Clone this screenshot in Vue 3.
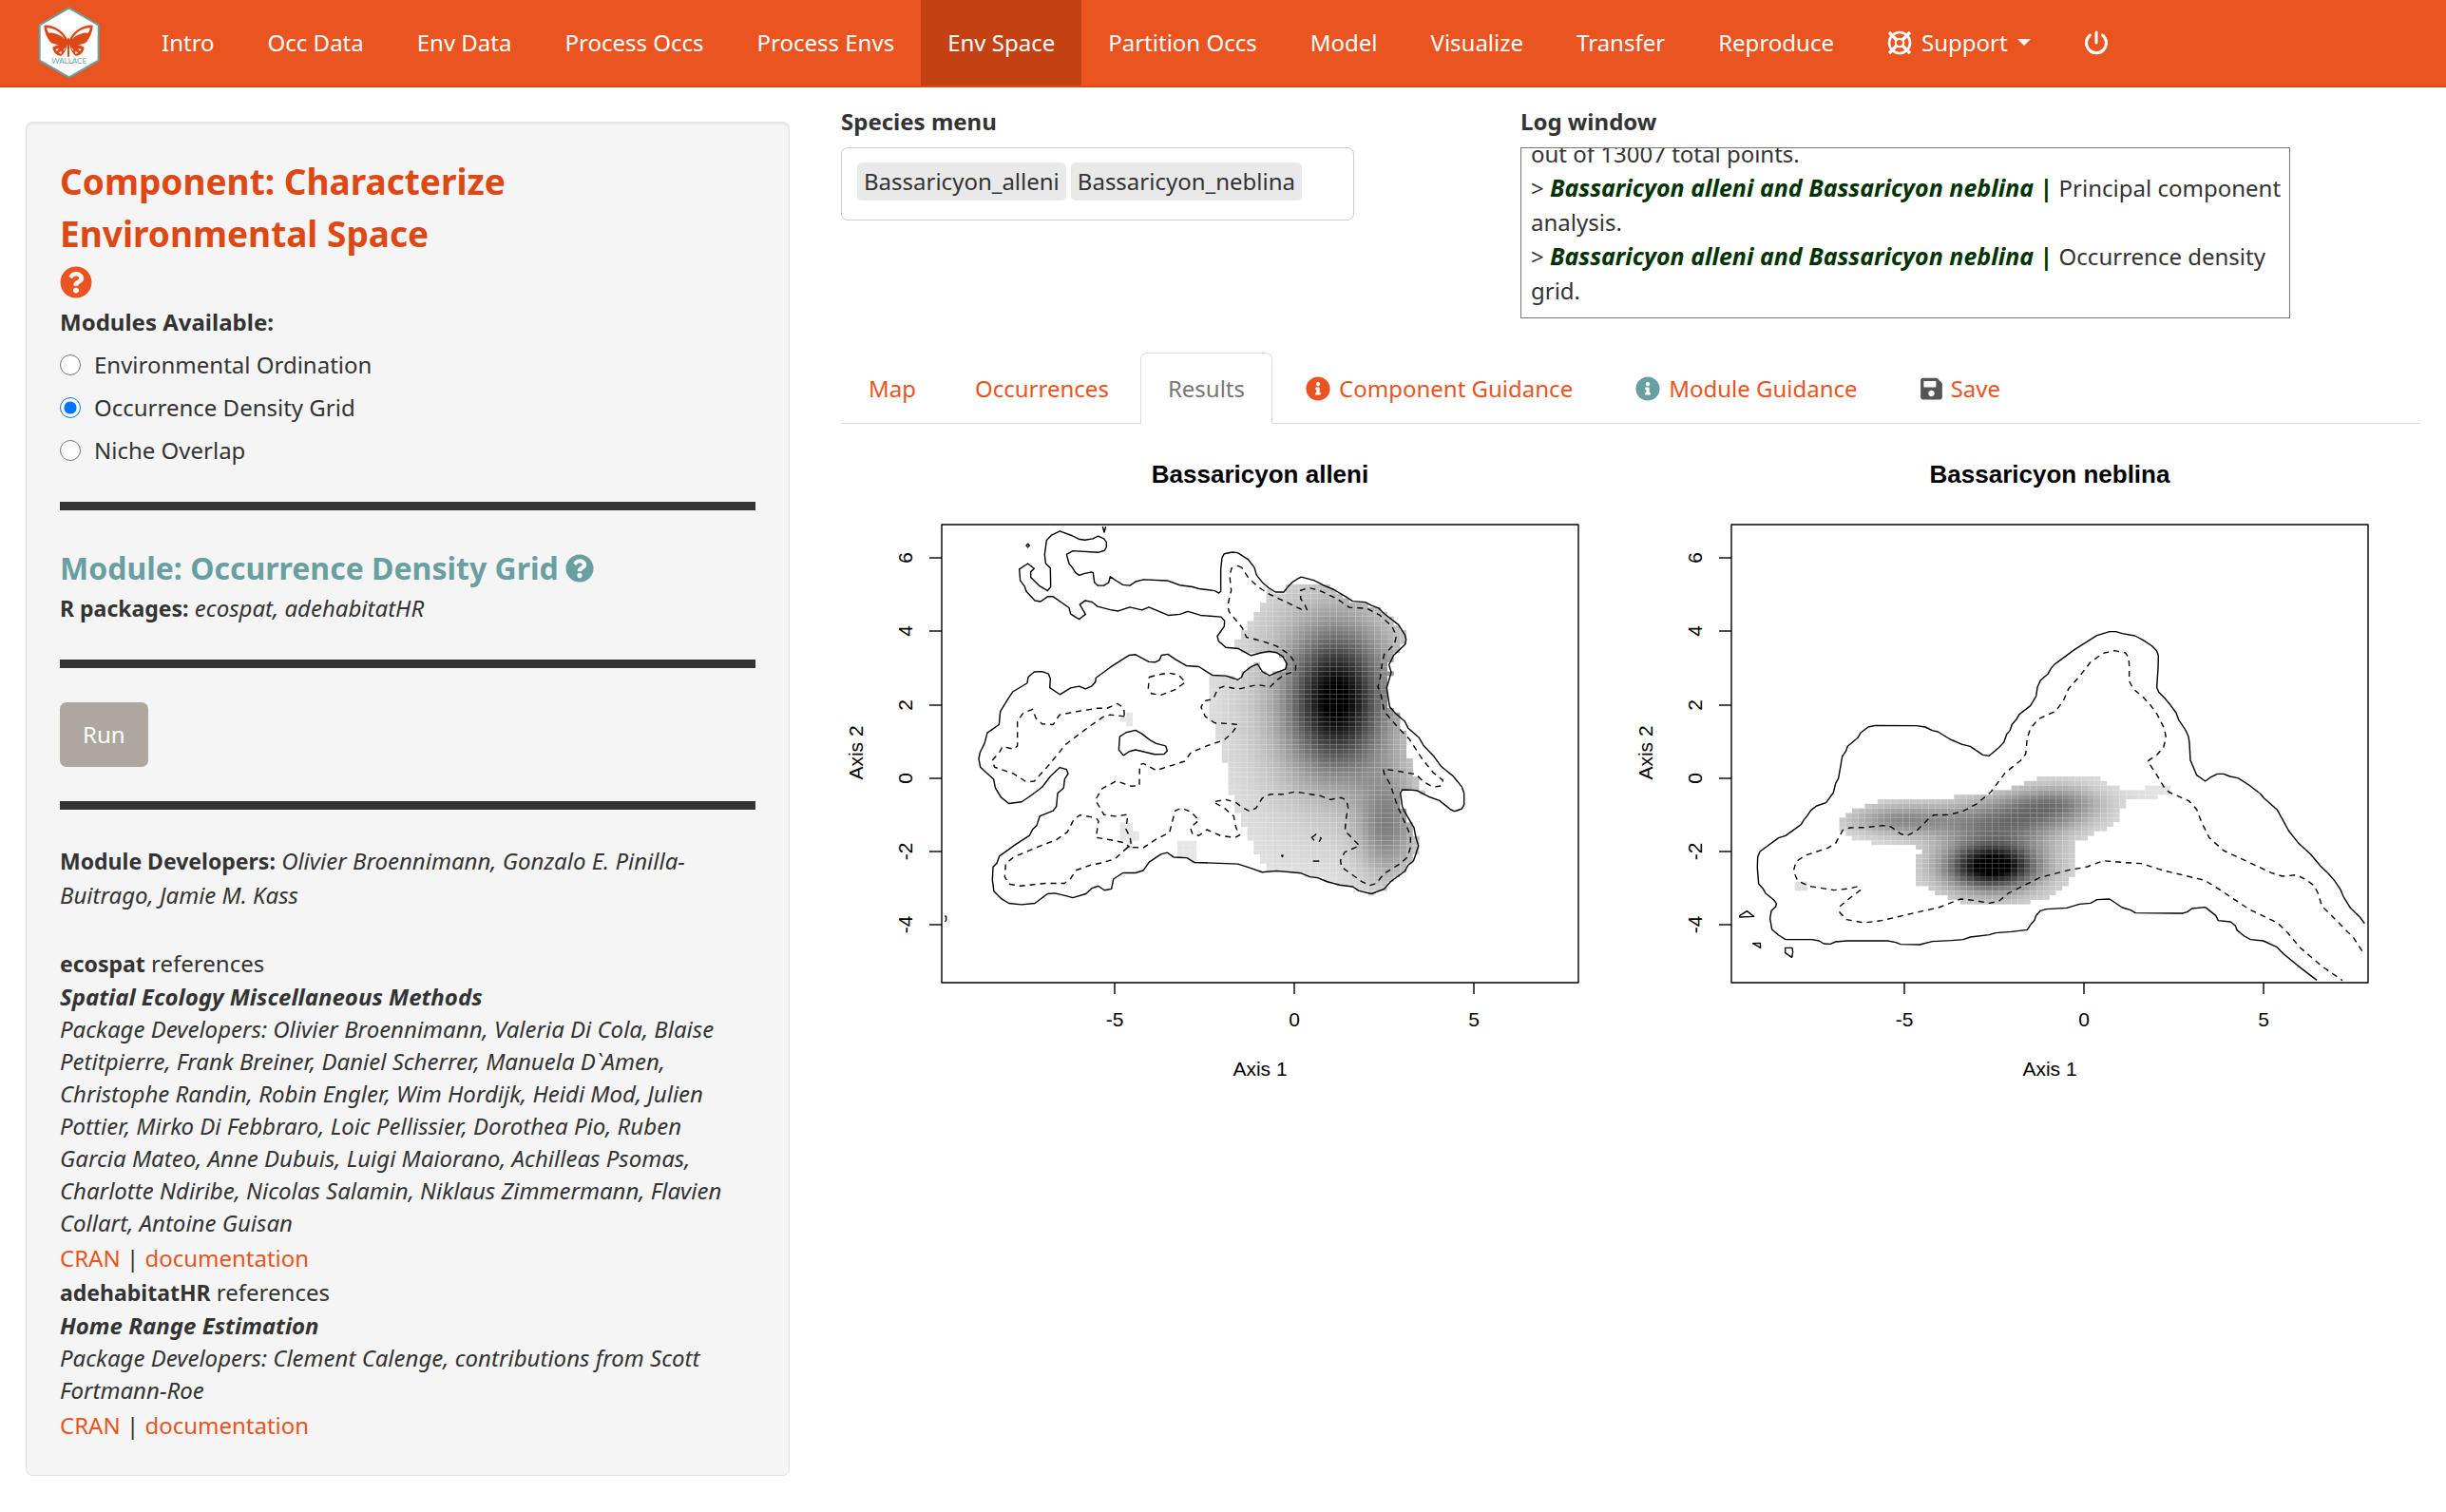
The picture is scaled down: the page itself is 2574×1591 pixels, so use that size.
<script setup>
import { ref } from 'vue'

const navLeft = ['Intro', 'Occ Data', 'Env Data', 'Process Occs', 'Process Envs', 'Env Space', 'Partition Occs', 'Model', 'Visualize', 'Transfer', 'Reproduce']
const activeNav = 'Env Space'

const modules = ['Environmental Ordination', 'Occurrence Density Grid', 'Niche Overlap']
const selected = ref('Occurrence Density Grid')

const icons = {
  info: 'M256 8C119.043 8 8 119.083 8 256c0 136.997 111.043 248 248 248s248-111.003 248-248C504 119.083 392.957 8 256 8zm0 110c23.196 0 42 18.804 42 42s-18.804 42-42 42-42-18.804-42-42 18.804-42 42-42zm56 254c0 6.627-5.373 12-12 12h-88c-6.627 0-12-5.373-12-12v-24c0-6.627 5.373-12 12-12h12v-64h-12c-6.627 0-12-5.373-12-12v-24c0-6.627 5.373-12 12-12h64c6.627 0 12 5.373 12 12v100h12c6.627 0 12 5.373 12 12v24z',
  question: 'M504 256c0 136.997-111.043 248-248 248S8 392.997 8 256C8 119.083 119.043 8 256 8s248 111.083 248 248zM262.655 90c-54.497 0-89.255 22.957-116.549 63.758-3.536 5.286-2.353 12.415 2.715 16.258l34.699 26.31c5.205 3.947 12.621 3.008 16.665-2.122 17.864-22.658 30.113-35.797 57.303-35.797 20.429 0 45.698 13.148 45.698 32.958 0 14.976-12.363 22.667-32.534 33.976C247.128 238.528 216 254.941 216 296v4c0 6.627 5.373 12 12 12h56c6.627 0 12-5.373 12-12v-1.333c0-28.462 83.186-29.647 83.186-106.667 0-58.002-60.165-102-116.531-102zM256 338c-25.365 0-46 20.635-46 46 0 25.364 20.635 46 46 46s46-20.636 46-46c0-25.365-20.635-46-46-46z',
  save: 'M433.941 129.941l-83.882-83.882A48 48 0 0 0 316.118 32H48C21.49 32 0 53.49 0 80v352c0 26.51 21.49 48 48 48h352c26.51 0 48-21.49 48-48V163.882a48 48 0 0 0-14.059-33.941zM224 416c-35.346 0-64-28.654-64-64 0-35.346 28.654-64 64-64s64 28.654 64 64c0 35.346-28.654 64-64 64zm96-304.52V212c0 6.627-5.373 12-12 12H76c-6.627 0-12-5.373-12-12V108c0-6.627 5.373-12 12-12h228.52c3.183 0 6.235 1.264 8.485 3.515l3.48 3.48A11.996 11.996 0 0 1 320 111.48z'
}

const tabs = [
  { label: 'Map' },
  { label: 'Occurrences' },
  { label: 'Results', active: true },
  { label: 'Component Guidance', icon: 'info', tone: 'orange' },
  { label: 'Module Guidance', icon: 'info', tone: 'teal' },
  { label: 'Save', icon: 'save', tone: 'grey' }
]

const yTicks = [
  { label: '6', y: 141 }, { label: '4', y: 218 }, { label: '2', y: 296 },
  { label: '0', y: 373 }, { label: '-2', y: 450 }, { label: '-4', y: 527 }
]
const xTicks = [{ label: '-5', x: 288 }, { label: '0', x: 477 }, { label: '5', x: 666 }]

/* Environmental background contours, as x,y pairs */
const alleniOutline = '466,84 505,98 525,108 545,111 570,107 587,99 605,107 613,118 613,132 607,143 587,149 507,144 487,155 495,183 505,195 515,210 527,219 545,213 566,209 571,211 575,240 585,250 605,250 620,241 625,223 645,236 665,248 687,250 705,238 730,232 805,235 845,249 885,254 905,260 955,266 968,273 974,268 974,200 978,165 985,153 1010,148 1027,150 1060,170 1080,195 1087,218 1105,240 1125,257 1147,270 1173,270 1185,255 1200,240 1216,230 1228,224 1268,234 1300,250 1330,262 1370,285 1390,298 1430,301 1450,311 1472,319 1490,336 1535,370 1545,385 1555,400 1559,415 1556,430 1545,440 1520,463 1505,492 1512,515 1498,563 1507,620 1525,640 1555,665 1565,685 1600,715 1615,740 1645,770 1670,803 1707,832 1735,865 1742,885 1742,920 1735,932 1712,940 1700,935 1664,907 1630,895 1595,877 1580,875 1547,874 1541,884 1547,925 1553,938 1572,970 1584,990 1590,1020 1598,1045 1590,1070 1582,1092 1565,1105 1555,1123 1510,1155 1490,1177 1450,1192 1410,1183 1390,1170 1350,1165 1310,1155 1280,1143 1255,1140 1228,1129 1150,1122 1105,1126 1070,1114 1028,1101 950,1098 890,1096 867,1082 825,1080 805,1066 785,1071 748,1095 730,1120 705,1128 665,1128 635,1147 629,1177 607,1181 587,1168 567,1175 548,1192 507,1204 485,1198 450,1190 427,1192 387,1221 345,1225 305,1221 280,1206 258,1185 253,1150 255,1110 267,1098 275,1077 325,1042 370,1014 380,995 393,983 403,954 445,938 455,925 459,885 478,868 481,842 492,825 487,812 466,806 437,832 410,866 370,895 345,911 305,916 280,897 262,868 257,842 215,805 210,780 214,760 228,733 237,700 274,675 278,635 300,600 317,575 363,548 366,530 385,514 410,513 430,520 436,535 434,562 466,583 500,563 527,558 547,566 567,557 578,545 580,532 625,500 685,463 705,461 747,483 768,484 780,478 787,463 807,460 830,475 865,495 905,498 947,524 990,526 1028,538 1040,530 1045,517 1070,498 1090,490 1105,513 1128,525 1150,516 1178,506 1183,490 1170,467 1150,455 1127,451 1100,456 1070,464 1030,443 990,439 967,420 963,405 985,375 986,358 975,346 910,341 870,329 845,338 808,341 747,316 725,325 687,316 650,328 625,324 585,314 567,300 546,296 529,308 547,338 527,353 500,337 495,318 445,284 427,284 405,299 387,296 360,268 355,253 341,235 338,200 365,183 385,198 374,208 374,225 400,250 427,266 437,254 436,197 421,182 418,155 424,112 440,96'

const neblinaOutline = '2065,755 2050,735 2020,706 1998,670 1990,650 1970,620 1950,597 1925,573 1895,537 1855,500 1825,462 1805,425 1788,395 1748,360 1735,345 1700,318 1665,296 1640,291 1620,283 1600,283 1580,293 1562,306 1535,287 1525,263 1515,240 1512,185 1509,165 1500,145 1478,112 1470,90 1450,63 1435,45 1415,25 1409,10 1413,-50 1414,-90 1409,-105 1395,-120 1365,-140 1340,-153 1300,-160 1280,-166 1260,-166 1220,-154 1150,-110 1085,-62 1075,-50 1065,-32 1042,-13 1032,10 1028,38 1010,68 975,95 965,112 952,127 946,145 935,158 926,184 910,200 880,226 860,223 820,196 795,190 757,174 718,150 700,146 678,135 650,131 520,130 498,135 474,153 466,168 433,196 427,212 416,228 404,297 395,313 388,342 365,374 335,384 317,398 305,416 295,428 286,443 237,478 215,485 156,528 149,545 148,580 152,630 165,644 174,660 200,681 208,692 206,703 192,715 188,740 194,774 215,792 237,806 320,806 343,810 358,819 378,820 395,813 430,810 560,810 585,815 600,821 660,822 700,812 760,809 798,806 820,798 880,791 900,785 950,781 1000,775 1010,760 1023,745 1028,730 1042,715 1060,710 1125,706 1165,694 1200,691 1220,680 1260,678 1300,705 1325,712 1342,722 1490,723 1505,719 1520,708 1560,704 1565,706 1595,730 1603,746 1642,750 1657,762 1662,776 1685,795 1705,806 1745,810 1787,829 1810,852 1860,893 1914,934'

function insidePolygon(x, y, pts) {
  let inside = false
  for (let i = 0, j = pts.length - 1; i < pts.length; j = i++) {
    const [xi, yi] = pts[i]
    const [xj, yj] = pts[j]
    if (yi > y !== yj > y && x < ((xj - xi) * (y - yi)) / (yj - yi) + xi) inside = !inside
  }
  return inside
}

const bell = (x, y, cx, cy, sx, sy) => Math.exp(-((x - cx) ** 2) / (2 * sx * sx) - ((y - cy) ** 2) / (2 * sy * sy))

function shade(darkness) {
  const v = Math.round(255 * (1 - Math.min(1, darkness)))
  return `rgb(${v},${v},${v})`
}

function stepAt(table, y, fallback) {
  let value = fallback
  for (const [from, x] of table) if (y >= from) value = x
  return value
}

function alleniCells() {
  const w = 20.1
  const h = 13.98
  const pts = alleniOutline.split(' ').map((p) => p.split(',').map(Number))
  const left = [[246, 1178], [260, 1118], [303, 1098], [330, 1078], [358, 1058], [386, 1038], [414, 1018], [440, 1038], [512, 1038], [526, 937], [665, 957], [722, 977], [792, 997], [888, 1018], [945, 1038], [986, 1058], [1030, 1078], [1072, 1098], [1098, 1118]]
  const right = [[0, 1620], [665, 1540], [693, 1562], [778, 1582], [833, 1602], [875, 1622]]
  const cells = []
  for (let r = 13; r < 82; r++) {
    for (let c = 41; c < 78; c++) {
      const x = 93 + c * w
      const y = 65 + r * h
      const cx = x + w / 2
      const cy = y + h / 2
      if (cx < stepAt(left, cy, 1178) || cx > stepAt(right, cy, 1620)) continue
      if (!insidePolygon(cx, cy, pts)) continue
      const d = 0.1 + 0.66 * bell(cx, cy, 1338, 600, 97, 137) + 0.28 * bell(cx, cy, 1338, 600, 200, 260) + 0.34 * bell(cx, cy, 1500, 990, 65, 115)
      cells.push({ x, y, w, h, fill: shade(d) })
    }
  }
  const strays = [[29, 41, 1, 3], [28, 42, 1, 1], [28, 65, 2, 4], [30, 67, 1, 2], [29, 69, 1, 2], [37, 69, 3, 4], [39, 73, 1, 1]]
  for (const [c0, r0, nc, nr] of strays)
    for (let c = c0; c < c0 + nc; c++)
      for (let r = r0; r < r0 + nr; r++) cells.push({ x: 93 + c * w, y: 65 + r * h, w, h, fill: shade(0.1) })
  return cells
}

function neblinaCells() {
  const w = 20.11
  const h = 14.43
  const rows = [
    [1030, 1230], [990, 1250], [950, 1290], [888, 1452], [768, 1412], [528, 1311], [487, 1311], [447, 1290], [427, 1290], [407, 1290],
    [407, 1270], [407, 1250], [427, 1210], [447, 1190], [508, 1150], [648, 1150], [668, 1150], [648, 1150], [648, 1150], [648, 1150],
    [648, 1150], [648, 1150], [648, 1130], [648, 1130], [688, 1110], [709, 1090], [750, 1070], [790, 1010]
  ]
  const cells = []
  rows.forEach(([from, to], i) => {
    const y = 291 + i * h
    for (let c = 16; c < 72; c++) {
      const x = 65 + c * w
      const cx = x + w / 2
      const cy = y + h / 2
      if (!((cx > from && cx < to) || (i === 2 && cx > 1372 && cx < 1452))) continue
      const d = 0.11 + 0.74 * bell(cx, cy, 890, 575, 92, 46) + 0.26 * bell(cx, cy, 890, 575, 150, 80) + 0.36 * bell(cx, cy, 920, 435, 135, 55) + 0.35 * bell(cx, cy, 1090, 380, 110, 45) + 0.33 * bell(cx, cy, 600, 428, 120, 36)
      cells.push({ x, y, w, h, fill: shade(d) })
    }
  })
  for (const c of [10, 11]) for (const r of [0, 1]) cells.push({ x: 65 + c * w, y: 623 + r * h, w, h, fill: shade(0.13) })
  return cells
}

const plots = [
  {
    title: 'Bassaricyon alleni',
    transform: 'translate(75 84) scale(0.33333 0.34439)',
    cells: alleniCells(),
    solid: [
      `M${alleniOutline}Z`,
      'M655,712 675,699 705,692 725,703 750,722 770,733 800,740 805,755 795,765 765,766 705,752 685,757 667,769 652,752Z',
      'M601,70 606,87 611,70', 'M360,128 365,123 370,128 365,133Z', 'M1166,1075 1170,1074 1169,1079Z',
      'M1265,1092H1285', 'M103,1259 107,1262 107,1273 103,1277'
    ],
    dashed: [
      'M1028,190 1040,195 1060,225 1090,253 1130,278 1180,300 1205,312 1228,323 1246,324 1240,310 1226,290 1226,265 1250,257 1280,263 1340,290 1380,317 1435,320 1475,340 1515,375 1528,405 1522,430 1490,460 1483,490 1478,530 1470,560 1480,585 1490,635 1530,680 1570,720 1610,780 1645,822 1675,845 1670,862 1645,866 1615,850 1590,827 1550,820 1520,815 1487,811 1490,825 1510,860 1530,920 1560,985 1573,1015 1573,1050 1563,1080 1540,1100 1490,1130 1465,1160 1445,1166 1420,1155 1355,1110 1352,1090 1365,1065 1400,1050 1412,1045 1390,1023 1366,1000 1370,960 1376,930 1372,908 1355,898 1320,904 1290,893 1240,885 1210,880 1170,888 1130,888 1105,900 1085,930 1065,940 1045,930 1020,912 990,904 950,911 985,930 1015,955 1022,990 1034,1012 1020,1020 975,1015 930,996 905,1014 885,1010 878,990 905,967 880,942 850,930 830,938 820,975 812,1005 770,1025 730,1051 692,1050 688,1020 675,995 680,950 640,955 605,950 578,905 600,870 645,847 690,863 717,861 718,798 730,794 770,815 860,787 880,760 930,740 985,722 1010,700 1028,675 1000,672 955,670 925,650 912,622 920,603 950,597 965,565 985,558 1028,567 1090,553 1130,560 1150,540 1175,522 1210,512 1211,490 1190,460 1150,435 1105,420 1055,408 1042,380 1000,330 996,310 1007,265 1002,220 1008,197Z',
      'M680,1050 640,1085 600,1097 560,1105 517,1120 500,1145 480,1160 420,1160 340,1168 305,1162 292,1140 295,1100 320,1080 400,1047 455,1027 490,1003 510,965 530,951 580,960 588,970 580,1020 630,1028 665,1035 685,1048Z',
      'M670,650 625,645 605,650 560,680 485,735 430,800 385,848 360,850 320,825 260,805 252,785 275,760 285,742 320,750 332,740 332,665 350,640 380,628 390,655 410,673 445,675 465,645 520,635 585,625 615,625 648,611 668,625Z',
      'M748,530 775,523 808,517 840,523 863,545 830,568 785,585 755,580 745,565Z',
      'M1261,1020 1275,1010 1291,1022 1285,1032 1268,1028Z'
    ]
  },
  {
    title: 'Bassaricyon neblina',
    transform: 'translate(84 274) scale(0.33333)',
    cells: neblinaCells(),
    solid: [
      `M${neblinaOutline}`,
      'M92,731 115,716 137,733 92,735Z', 'M134,818 157,817 158,832Z', 'M236,832 258,832 260,845 257,862 236,848Z'
    ],
    dashed: [
      'M2057,842 2030,800 1975,745 1930,700 1918,660 1905,635 1880,617 1850,602 1805,606 1770,595 1700,562 1620,525 1575,485 1550,435 1535,395 1510,368 1450,342 1435,330 1405,280 1380,243 1410,222 1430,200 1438,168 1433,140 1410,95 1390,67 1365,40 1335,15 1322,-10 1322,-60 1320,-85 1310,-99 1275,-106 1240,-98 1200,-70 1165,-25 1130,15 1115,50 1090,85 1035,110 1010,140 1000,170 995,220 980,240 930,280 885,340 840,378 795,402 750,412 705,413 685,428 650,463 620,478 600,472 570,450 545,446 490,452 440,453 418,460 395,502 370,517 300,540 270,560 262,590 275,620 310,637 390,650 440,645 465,638 473,650 440,675 410,700 408,720 430,743 485,753 540,746 660,718 720,705 790,678 830,682 880,691 910,685 940,660 1040,610 1130,587 1190,576 1240,557 1310,563 1360,566 1430,588 1490,602 1560,619 1610,650 1700,710 1790,753 1820,782 1860,830 1930,890 1995,935'
    ]
  }
]
</script>

<template>
  <div class="page">
    <header class="navbar">
      <a class="brand" href="#" aria-label="Wallace">
        <svg viewBox="0 0 228 252" width="76" height="84">
          <path d="M116 16 209 70V182L116 235 23 182V70Z" fill="#fff" stroke="#6a9fa1" stroke-width="6" />
          <g id="wings" fill="#dd4814">
            <path d="M111 116C98 90 70 68 37 71 38 94 48 112 57 124 72 136 95 133 111 131Z" />
            <path d="M46 79C70 79 90 94 102 114 84 98 66 94 52 95 48 90 46 84 46 79Z" fill="#fff" />
            <path d="M111 129C90 130 72 134 64 141 66 155 76 168 91 167 101 161 108 146 111 129Z" />
            <path d="M73 147 84 144 78 153ZM83 158 92 152 92 161ZM98 148 104 140 101 152Z" fill="#fff" />
          </g>
          <use href="#wings" transform="translate(228 0) scale(-1 1)" />
          <path d="M111 112H117V170H111Z" fill="#dd4814" />
          <path d="M113 113 103 84M115 113 125 84" stroke="#f0a080" stroke-width="1" />
          <text x="116" y="192" text-anchor="middle" class="brand-text">WALLACE</text>
        </svg>
      </a>
      <nav class="nav">
        <a v-for="item in navLeft" :key="item" href="#" class="nav-link" :class="{ active: item === activeNav }">{{ item }}</a>
        <a href="#" class="nav-link">
          <svg viewBox="0 0 26 26" width="26" height="26" fill="none" stroke="#fff">
            <circle cx="13" cy="13" r="11" stroke-width="2.6" />
            <circle cx="13" cy="13" r="4.2" stroke-width="2.2" />
            <path d="M2 2 10 10M24 2 16 10M2 24 10 16M24 24 16 16" stroke-width="3.4" />
          </svg>
          Support
          <svg viewBox="0 0 14 8" width="14" height="8"><path d="M0 0H14L7 7Z" fill="#fff" /></svg>
        </a>
        <a href="#" class="nav-link" aria-label="Quit">
          <svg viewBox="0 0 26 26" width="26" height="26" fill="none" stroke="#fff" stroke-width="3" stroke-linecap="round">
            <path d="M6.500 5A10.500 10.500 0 1 0 19.500 5M13 2V13" />
          </svg>
        </a>
      </nav>
    </header>

    <div class="columns">
      <aside class="side">
        <section class="well">
          <h1>Component: Characterize Environmental Space</h1>
          <a class="help big" href="#" aria-label="Component help">
            <svg viewBox="0 0 512 512" width="34" height="34"><path :d="icons.question" fill="#e95420" /></svg>
          </a>
          <fieldset>
            <legend>Modules Available:</legend>
            <label v-for="m in modules" :key="m" class="radio">
              <input v-model="selected" type="radio" name="module" :value="m" />
              <span>{{ m }}</span>
            </label>
          </fieldset>
          <hr />
          <h2>
            <span>Module: Occurrence Density Grid</span>
            <a class="help" href="#" aria-label="Module help">
              <svg viewBox="0 0 512 512" width="30" height="30"><path :d="icons.question" fill="#6a9fa1" /></svg>
            </a>
          </h2>
          <p><b>R packages:</b> <i>ecospat, adehabitatHR</i></p>
          <hr />
          <button type="button" class="run">Run</button>
          <hr />
          <p class="developers"><b>Module Developers:</b> <i>Olivier Broennimann, Gonzalo E. Pinilla-<br />Buitrago, Jamie M. Kass</i></p>
          <p><b>ecospat</b> references</p>
          <p class="cite">
            <b>Spatial Ecology Miscellaneous Methods</b><br />
            Package Developers: Olivier Broennimann, Valeria Di Cola, Blaise<br />
            Petitpierre, Frank Breiner, Daniel Scherrer, Manuela D`Amen,<br />
            Christophe Randin, Robin Engler, Wim Hordijk, Heidi Mod, Julien<br />
            Pottier, Mirko Di Febbraro, Loic Pellissier, Dorothea Pio, Ruben<br />
            Garcia Mateo, Anne Dubuis, Luigi Maiorano, Achilleas Psomas,<br />
            Charlotte Ndiribe, Nicolas Salamin, Niklaus Zimmermann, Flavien<br />
            Collart, Antoine Guisan
          </p>
          <p><a href="#">CRAN</a> | <a href="#">documentation</a></p>
          <p><b>adehabitatHR</b> references</p>
          <p class="cite">
            <b>Home Range Estimation</b><br />
            Package Developers: Clement Calenge, contributions from Scott<br />
            Fortmann-Roe
          </p>
          <p><a href="#">CRAN</a> | <a href="#">documentation</a></p>
        </section>
      </aside>

      <main class="main">
        <div class="top">
          <div class="species">
            <h3>Species menu</h3>
            <div class="select-box">
              <span class="chip">Bassaricyon_alleni</span>
              <span class="chip">Bassaricyon_neblina</span>
            </div>
          </div>
          <div class="log">
            <h3>Log window</h3>
            <div class="log-box">
              <p>out of 13007 total points.</p>
              <p>&gt; <b><i>Bassaricyon alleni and Bassaricyon neblina</i> |</b> Principal component<br />analysis.</p>
              <p>&gt; <b><i>Bassaricyon alleni and Bassaricyon neblina</i> |</b> Occurrence density<br />grid.</p>
            </div>
          </div>
        </div>

        <nav class="tabs">
          <a v-for="t in tabs" :key="t.label" href="#" class="tab" :class="{ current: t.active, iconic: t.icon }">
            <svg v-if="t.icon" :viewBox="t.icon === 'save' ? '0 0 448 512' : '0 0 512 512'" :width="t.icon === 'save' ? 23 : 26" height="26" :class="t.tone"><path :d="icons[t.icon]" /></svg>
            {{ t.label }}
          </a>
        </nav>

        <div class="plots">
          <svg v-for="p in plots" :key="p.title" class="plot" viewBox="0 0 831 720" role="img" :aria-label="p.title">
            <text class="plot-title" x="441" y="62" text-anchor="middle">{{ p.title }}</text>
            <g :transform="p.transform">
              <rect v-for="(c, i) in p.cells" :key="i" :x="c.x" :y="c.y" :width="c.w" :height="c.h" :fill="c.fill" />
              <path v-for="d in p.solid" :key="d" :d="d" class="line" />
              <path v-for="d in p.dashed" :key="d" :d="d" class="line dashed" />
            </g>
            <rect x="106" y="106" width="670" height="482" class="line" />
            <g v-for="t in yTicks" :key="'y' + t.label">
              <path :d="`M93 ${t.y}H106`" class="line" />
              <text :transform="`translate(75 ${t.y}) rotate(-90)`" text-anchor="middle">{{ t.label }}</text>
            </g>
            <g v-for="t in xTicks" :key="'x' + t.label">
              <path :d="`M${t.x} 588V600`" class="line" />
              <text :x="t.x" y="634" text-anchor="middle">{{ t.label }}</text>
            </g>
            <text x="441" y="686" text-anchor="middle">Axis 1</text>
            <text transform="translate(23 346) rotate(-90)" text-anchor="middle">Axis 2</text>
          </svg>
        </div>
      </main>
    </div>
  </div>
</template>

<style>
body {
  margin: 0;
  background: #fff;
}
</style>

<style scoped>
* {
  box-sizing: border-box;
}
.page {
  font-family: 'Noto Sans', 'Open Sans', sans-serif;
  font-size: 24px;
  line-height: 36px;
  color: #333;
}
a {
  color: #e95420;
  text-decoration: none;
}
h1, h2, h3, p, fieldset, legend {
  margin: 0;
  padding: 0;
  border: 0;
}
.navbar {
  display: flex;
  height: 92px;
  padding-left: 34px;
  background: #e95420;
  border-bottom: 2px solid #dd4814;
}
.brand {
  display: flex;
  align-items: center;
  margin-right: 32px;
}
.brand-text {
  font-family: 'Lato', sans-serif;
  font-size: 24px;
  fill: #6a9fa1;
}
.nav {
  display: flex;
}
.nav-link {
  display: flex;
  align-items: center;
  gap: 10px;
  padding: 0 28px;
  color: #fff;
  white-space: nowrap;
}
.nav-link.active {
  background: #c34113;
}
.columns {
  display: grid;
  grid-template-columns: minmax(0, 1fr) minmax(0, 2fr);
}
.side {
  padding: 36px 27px 38px;
}
.well {
  padding: 34px 35px;
  border: 1px solid #e3e3e3;
  border-radius: 7px;
  background: #f5f5f5;
  box-shadow: inset 0 2px 2px rgba(0, 0, 0, 0.05);
}
.well p > b {
  font-size: 23px;
}
h1 {
  font-size: 37px;
  line-height: 55px;
  color: #dd4814;
  max-width: 600px;
}
.help {
  display: flex;
}
.help.big {
  padding: 7px 0;
}
legend {
  font-weight: bold;
}
.radio {
  display: flex;
  align-items: center;
  gap: 14px;
  height: 36px;
  margin-top: 9px;
}
.radio input {
  width: 22px;
  height: 22px;
  margin: 0;
  accent-color: #0075ff;
}
hr {
  height: 9px;
  margin: 36px 0;
  border: 0;
  background: #333;
}
h2 {
  display: flex;
  align-items: center;
  gap: 7px;
  font-size: 32px;
  line-height: 49px;
  color: #6a9fa1;
  white-space: nowrap;
}
.run {
  display: block;
  height: 68px;
  padding: 0 24px;
  border: 0;
  border-radius: 7px;
  background: #aea79f;
  color: #fff;
  font: inherit;
}
.developers {
  margin-bottom: 36px;
}
.well .cite,
.well .cite > b {
  font-size: 24px;
}
.cite {
  padding-bottom: 2px;
  line-height: 34px;
  font-style: italic;
  white-space: nowrap;
}
.main {
  padding: 18px 27px 0;
}
.top {
  display: grid;
  grid-template-columns: 5fr 7fr;
  margin: 0 -27px;
}
.species, .log {
  padding: 0 27px;
}
h3 {
  font-size: 24px;
  line-height: 36px;
  margin-bottom: 9px;
}
.select-box {
  display: flex;
  align-items: flex-start;
  gap: 5px;
  max-width: 540px;
  height: 77px;
  padding: 15px 16px;
  border: 1px solid #ccc;
  border-radius: 7px;
}
.chip {
  height: 40px;
  padding: 0 7px;
  line-height: 40px;
  border-radius: 5px;
  background: #e9e9e9;
}
.log-box {
  display: flex;
  flex-direction: column;
  justify-content: flex-end;
  max-width: 810px;
  height: 180px;
  padding: 0 10px;
  padding-bottom: 10px;
  border: 1px solid #777;
  overflow: hidden;
  white-space: nowrap;
}
.log-box b {
  font-size: 25px;
  line-height: 1;
  color: #003300;
}
.tabs {
  display: flex;
  gap: 4px;
  margin-top: 36px;
  border-bottom: 1px solid #ddd;
}
.tab {
  display: flex;
  align-items: center;
  gap: 9px;
  height: 75px;
  padding: 0 28px;
  margin-bottom: -1px;
  border: 1px solid transparent;
  border-radius: 7px 7px 0 0;
  white-space: nowrap;
}
.tab.iconic {
  padding: 0 30px;
}
.tab.current {
  color: #777;
  background: #fff;
  border-color: #ddd;
  border-bottom-color: #fff;
}
.orange {
  fill: #e95420;
}
.teal {
  fill: #6a9fa1;
}
.grey {
  fill: #555;
}
.plots {
  display: grid;
  grid-template-columns: 1fr 1fr;
}
.plot {
  display: block;
  width: 100%;
  font-family: 'Liberation Sans', Arial, sans-serif;
  font-size: 21px;
  fill: #000;
}
.plot-title {
  font-size: 26px;
  font-weight: bold;
}
.line {
  fill: none;
  stroke: #000;
  stroke-width: 1.4px;
  stroke-linejoin: round;
  vector-effect: non-scaling-stroke;
}
.dashed {
  stroke-dasharray: 6 5;
}
</style>
